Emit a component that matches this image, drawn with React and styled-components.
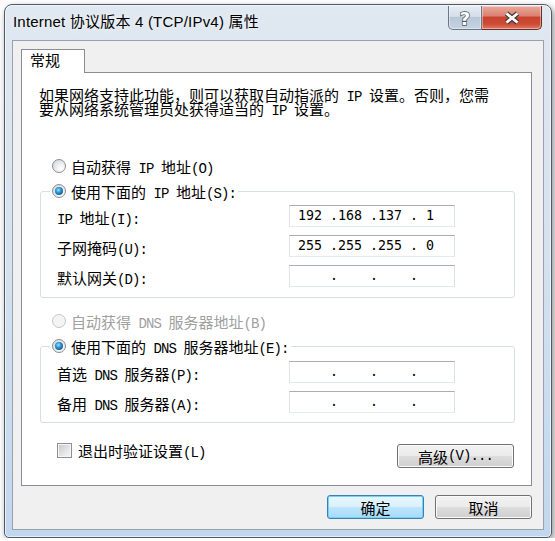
import React from "react";
import styled, { createGlobalStyle } from "styled-components";

const GlobalStyle = createGlobalStyle`
  html, body {
    margin: 0;
    padding: 0;
    background: #ffffff;
  }
  body {
    font-family: "Noto Sans CJK SC", "Noto Sans", sans-serif;
    color: #000;
  }
`;

const CJK = `"Noto Sans CJK SC", "Noto Sans CJK JP", sans-serif`;

// window chrome
const Window = styled.div`
  box-sizing: border-box;
  width: 548px;
  height: 534px;
  margin: 4px 0 0 4px;
  padding: 0 7px 7px 7px;
  border: 1px solid #505a66;
  border-radius: 8px 8px 5px 5px;
  background: linear-gradient(180deg, #e0e8f1 0%, #d4e1ee 50%, #c1d7ee 100%);
  box-shadow: 2px 3px 7px rgba(0, 0, 0, 0.45), inset 0 0 0 1px rgba(255, 255, 255, 0.6);
  display: flex;
  flex-direction: column;
`;

const TitleBar = styled.div`
  height: 35px;
  display: flex;
  align-items: flex-start;
`;

const TitleText = styled.div`
  flex: 1;
  padding: 7px 0 0 1px;
  font-family: "Liberation Sans", ${CJK};
  font-size: 15px;
  line-height: 20px;
  letter-spacing: 0.2px;
  white-space: nowrap;
  text-shadow: 0 0 6px rgba(255, 255, 255, 0.9);
`;

const CaptionButtons = styled.div`
  display: flex;
  margin: 1px 2px 0 0;
`;

const CapButton = styled.div`
  box-sizing: border-box;
  width: ${(p) => p.$w}px;
  height: 24px;
  display: flex;
  align-items: center;
  justify-content: center;
  border: 1px solid ${(p) => (p.$close ? "#6b2c24" : "#6c7786")};
  border-top: none;
  ${(p) => p.$close && "border-left: none;"}
  border-radius: ${(p) => (p.$close ? "0 0 5px 0" : "0 0 0 5px")};
  background: ${(p) =>
    p.$close
      ? "linear-gradient(180deg, #e9aa9e 0%, #dc8270 42%, #c8432e 50%, #cc4b35 78%, #dd7a64 100%)"
      : "linear-gradient(180deg, #e4ebf3 0%, #d5dfea 45%, #b9c7d7 50%, #c5d3e2 100%)"};
  box-shadow: inset 0 0 0 1px rgba(255, 255, 255, 0.4);
`;

const Client = styled.div`
  flex: 1;
  box-sizing: border-box;
  border: 1px solid #98a2ad;
  background: #f0f0f0;
  padding: 8px 11px 10px 8px;
  display: flex;
  flex-direction: column;
`;

// tabs
const TabStrip = styled.div`
  display: flex;
  height: 24px;
  margin-bottom: -1px;
  position: relative;
  z-index: 1;
`;

const Tab = styled.div`
  box-sizing: border-box;
  width: 64px;
  height: 24px;
  padding: 0 0 4px 8px;
  border: 1px solid #898c95;
  border-bottom: none;
  background: #fff;
  display: flex;
  align-items: center;
  font-family: ${CJK};
  font-size: 15px;
`;

const Panel = styled.div`
  box-sizing: border-box;
  width: 511px;
  height: 414px;
  padding: 15px 16px 0 18px;
  border: 1px solid #898c95;
  background: #fff;
  display: flex;
  flex-direction: column;
  font-family: ${CJK};
  font-size: 15px;
`;

const Desc = styled.div`
  margin-left: -1px;
  display: flex;
  flex-direction: column;
`;

const DescLine = styled.div`
  height: 14px;
  line-height: 14px;
  white-space: nowrap;
`;

const Lat = styled.span`
  font-family: "Liberation Mono", monospace;
  font-size: 14px;
  letter-spacing: -0.9px;
`;

const RadioRow = styled.label`
  display: flex;
  align-items: center;
  gap: 5px;
  height: 20px;
  margin: ${(p) => p.$top || 0}px 0 0 ${(p) => p.$left || 0}px;
  color: ${(p) => (p.$disabled ? "#a0a0a0" : "#000")};
  white-space: nowrap;
`;

const Radio = styled.span`
  box-sizing: border-box;
  flex: none;
  position: relative;
  width: 14px;
  height: 14px;
  border-radius: 50%;
  border: 1px solid ${(p) => (p.$disabled ? "#c4c6c8" : "#8a8d91")};
  background: ${(p) =>
    p.$disabled
      ? "#f4f4f4"
      : "radial-gradient(circle at 68% 72%, #ffffff 0%, #f1f1f1 35%, #cdd0d3 100%)"};
  &::after {
    content: "";
    display: ${(p) => (p.$checked ? "block" : "none")};
    position: absolute;
    left: 2px;
    top: 2px;
    width: 8px;
    height: 8px;
    border-radius: 50%;
    background: radial-gradient(circle at 42% 38%, #a6e6ff 0%, #2f9ad9 35%, #13538f 78%, #0b3866 100%);
  }
`;

const Group = styled.fieldset`
  box-sizing: border-box;
  width: 475px;
  min-width: 0;
  margin: ${(p) => p.$top}px 0 0 0;
  padding: 0;
  border: 1px solid #d5dfe5;
  border-radius: 3px;
`;

const Legend = styled.legend`
  margin-left: 9px;
  padding: 0 2px;
`;

const Rows = styled.div`
  display: flex;
  flex-direction: column;
  gap: 8px;
  padding: ${(p) => p.$pt}px 0 ${(p) => p.$pb}px 16px;
`;

const FieldRow = styled.div`
  display: flex;
  align-items: center;
  height: 22px;
`;

const FieldLabel = styled.span`
  width: 232px;
  padding-top: 2px;
  white-space: nowrap;
`;

const IpBox = styled.div`
  box-sizing: border-box;
  width: 166px;
  height: 22px;
  padding-left: 8px;
  border: 1px solid;
  border-color: #abadb3 #dbdfe6 #e3e9ef #e2e3ea;
  background: #fff;
  font-family: "DejaVu Sans Mono", monospace;
  font-size: 13.3px;
  line-height: 20px;
  white-space: pre;
`;

const BottomRow = styled.div`
  display: flex;
  justify-content: space-between;
  align-items: flex-start;
  margin-top: 20px;
`;

const CheckRow = styled.label`
  display: flex;
  align-items: center;
  gap: 6px;
  height: 15px;
  margin-left: 17px;
  white-space: nowrap;
`;

const Check = styled.span`
  box-sizing: border-box;
  flex: none;
  width: 15px;
  height: 15px;
  border: 1px solid #8e8f8f;
  background: linear-gradient(135deg, #c4c7cc 0%, #e2e4e6 55%, #f8f8f8 100%);
  box-shadow: inset 0 0 0 1px #f6f6f6;
`;

const Button = styled.div`
  box-sizing: border-box;
  width: ${(p) => p.$w}px;
  height: 24px;
  margin: ${(p) => p.$m || "0"};
  display: flex;
  align-items: center;
  justify-content: center;
  border: 1px solid ${(p) => (p.$default ? "#3c7fb1" : "#707070")};
  border-radius: 3px;
  background: ${(p) =>
    p.$default
      ? "linear-gradient(180deg, #eaf6fd 0%, #d9f0fc 50%, #bee6fd 51%, #a7d9f5 100%)"
      : "linear-gradient(180deg, #f2f2f2 0%, #ebebeb 50%, #dddddd 51%, #cfcfcf 100%)"};
  box-shadow: inset 0 0 0 1px ${(p) => (p.$default ? "#6fd4fb" : "#fbfbfb")};
  font-family: ${CJK};
  font-size: 15px;
  white-space: nowrap;
`;

const Footer = styled.div`
  display: flex;
  justify-content: flex-end;
  gap: 11px;
  margin-top: 9px;
`;

const ASCII = /([\x20-\x7e]+)/;

const Mixed = ({ text }) =>
  text
    .split(ASCII)
    .filter(Boolean)
    .map((part, i) =>
      ASCII.test(part) ? <Lat key={i}>{part}</Lat> : <React.Fragment key={i}>{part}</React.Fragment>
    );

const seg = (n) => {
  if (n === undefined) return "   ";
  const s = String(n);
  if (s.length === 3) return s;
  if (s.length === 2) return " " + s;
  return " " + s + " ";
};

const ipText = (octets = []) => [0, 1, 2, 3].map((i) => seg(octets[i])).join(" .");

const HelpIcon = () => (
  <svg width="14" height="20" viewBox="0 0 14 20">
    <text
      x="7"
      y="16.5"
      textAnchor="middle"
      fontFamily="DejaVu Sans, sans-serif"
      fontWeight="bold"
      fontSize="18"
      fill="#fff"
      stroke="#505860"
      strokeWidth="1.5"
      paintOrder="stroke"
    >
      ?
    </text>
  </svg>
);

const CloseIcon = () => (
  <svg width="18" height="14" viewBox="0 0 18 14">
    <path d="M3.5 2.5 L14.5 11.5 M14.5 2.5 L3.5 11.5" stroke="#3a3a3a" strokeWidth="5" />
    <path d="M3.5 2.5 L14.5 11.5 M14.5 2.5 L3.5 11.5" stroke="#ffffff" strokeWidth="2.8" />
  </svg>
);

const IpRow = ({ label, value }) => (
  <FieldRow>
    <FieldLabel>
      <Mixed text={label} />
    </FieldLabel>
    <IpBox>{ipText(value)}</IpBox>
  </FieldRow>
);

export default function App() {
  return (
    <>
      <GlobalStyle />
      <Window>
        <TitleBar>
          <TitleText>Internet 协议版本 4 (TCP/IPv4) 属性</TitleText>
          <CaptionButtons>
            <CapButton $w={34}>
              <HelpIcon />
            </CapButton>
            <CapButton $w={60} $close>
              <CloseIcon />
            </CapButton>
          </CaptionButtons>
        </TitleBar>

        <Client>
          <TabStrip>
            <Tab>常规</Tab>
          </TabStrip>
          <Panel>
            <Desc>
              <DescLine>
                <Mixed text="如果网络支持此功能，则可以获取自动指派的 IP 设置。否则，您需" />
              </DescLine>
              <DescLine>
                <Mixed text="要从网络系统管理员处获得适当的 IP 设置。" />
              </DescLine>
            </Desc>

            <RadioRow $top={40} $left={12}>
              <Radio />
              <span>
                <Mixed text="自动获得 IP 地址(O)" />
              </span>
            </RadioRow>

            <Group $top={5}>
              <Legend>
                <RadioRow>
                  <Radio $checked />
                  <span>
                    <Mixed text="使用下面的 IP 地址(S):" />
                  </span>
                </RadioRow>
              </Legend>
              <Rows $pt={4} $pb={10}>
                <IpRow label="IP 地址(I):" value={[192, 168, 137, 1]} />
                <IpRow label="子网掩码(U):" value={[255, 255, 255, 0]} />
                <IpRow label="默认网关(D):" />
              </Rows>
            </Group>

            <RadioRow $top={13} $left={12} $disabled>
              <Radio $disabled />
              <span>
                <Mixed text="自动获得 DNS 服务器地址(B)" />
              </span>
            </RadioRow>

            <Group $top={5}>
              <Legend>
                <RadioRow>
                  <Radio $checked />
                  <span>
                    <Mixed text="使用下面的 DNS 服务器地址(E):" />
                  </span>
                </RadioRow>
              </Legend>
              <Rows $pt={5} $pb={9}>
                <IpRow label="首选 DNS 服务器(P):" />
                <IpRow label="备用 DNS 服务器(A):" />
              </Rows>
            </Group>

            <BottomRow>
              <CheckRow>
                <Check />
                <span>
                  <Mixed text="退出时验证设置(L)" />
                </span>
              </CheckRow>
              <Button $w={117} $m="1px 1px 0 0">
                <Mixed text="高级(V)..." />
              </Button>
            </BottomRow>
          </Panel>

          <Footer>
            <Button $w={97} $default>
              确定
            </Button>
            <Button $w={97}>取消</Button>
          </Footer>
        </Client>
      </Window>
    </>
  );
}
